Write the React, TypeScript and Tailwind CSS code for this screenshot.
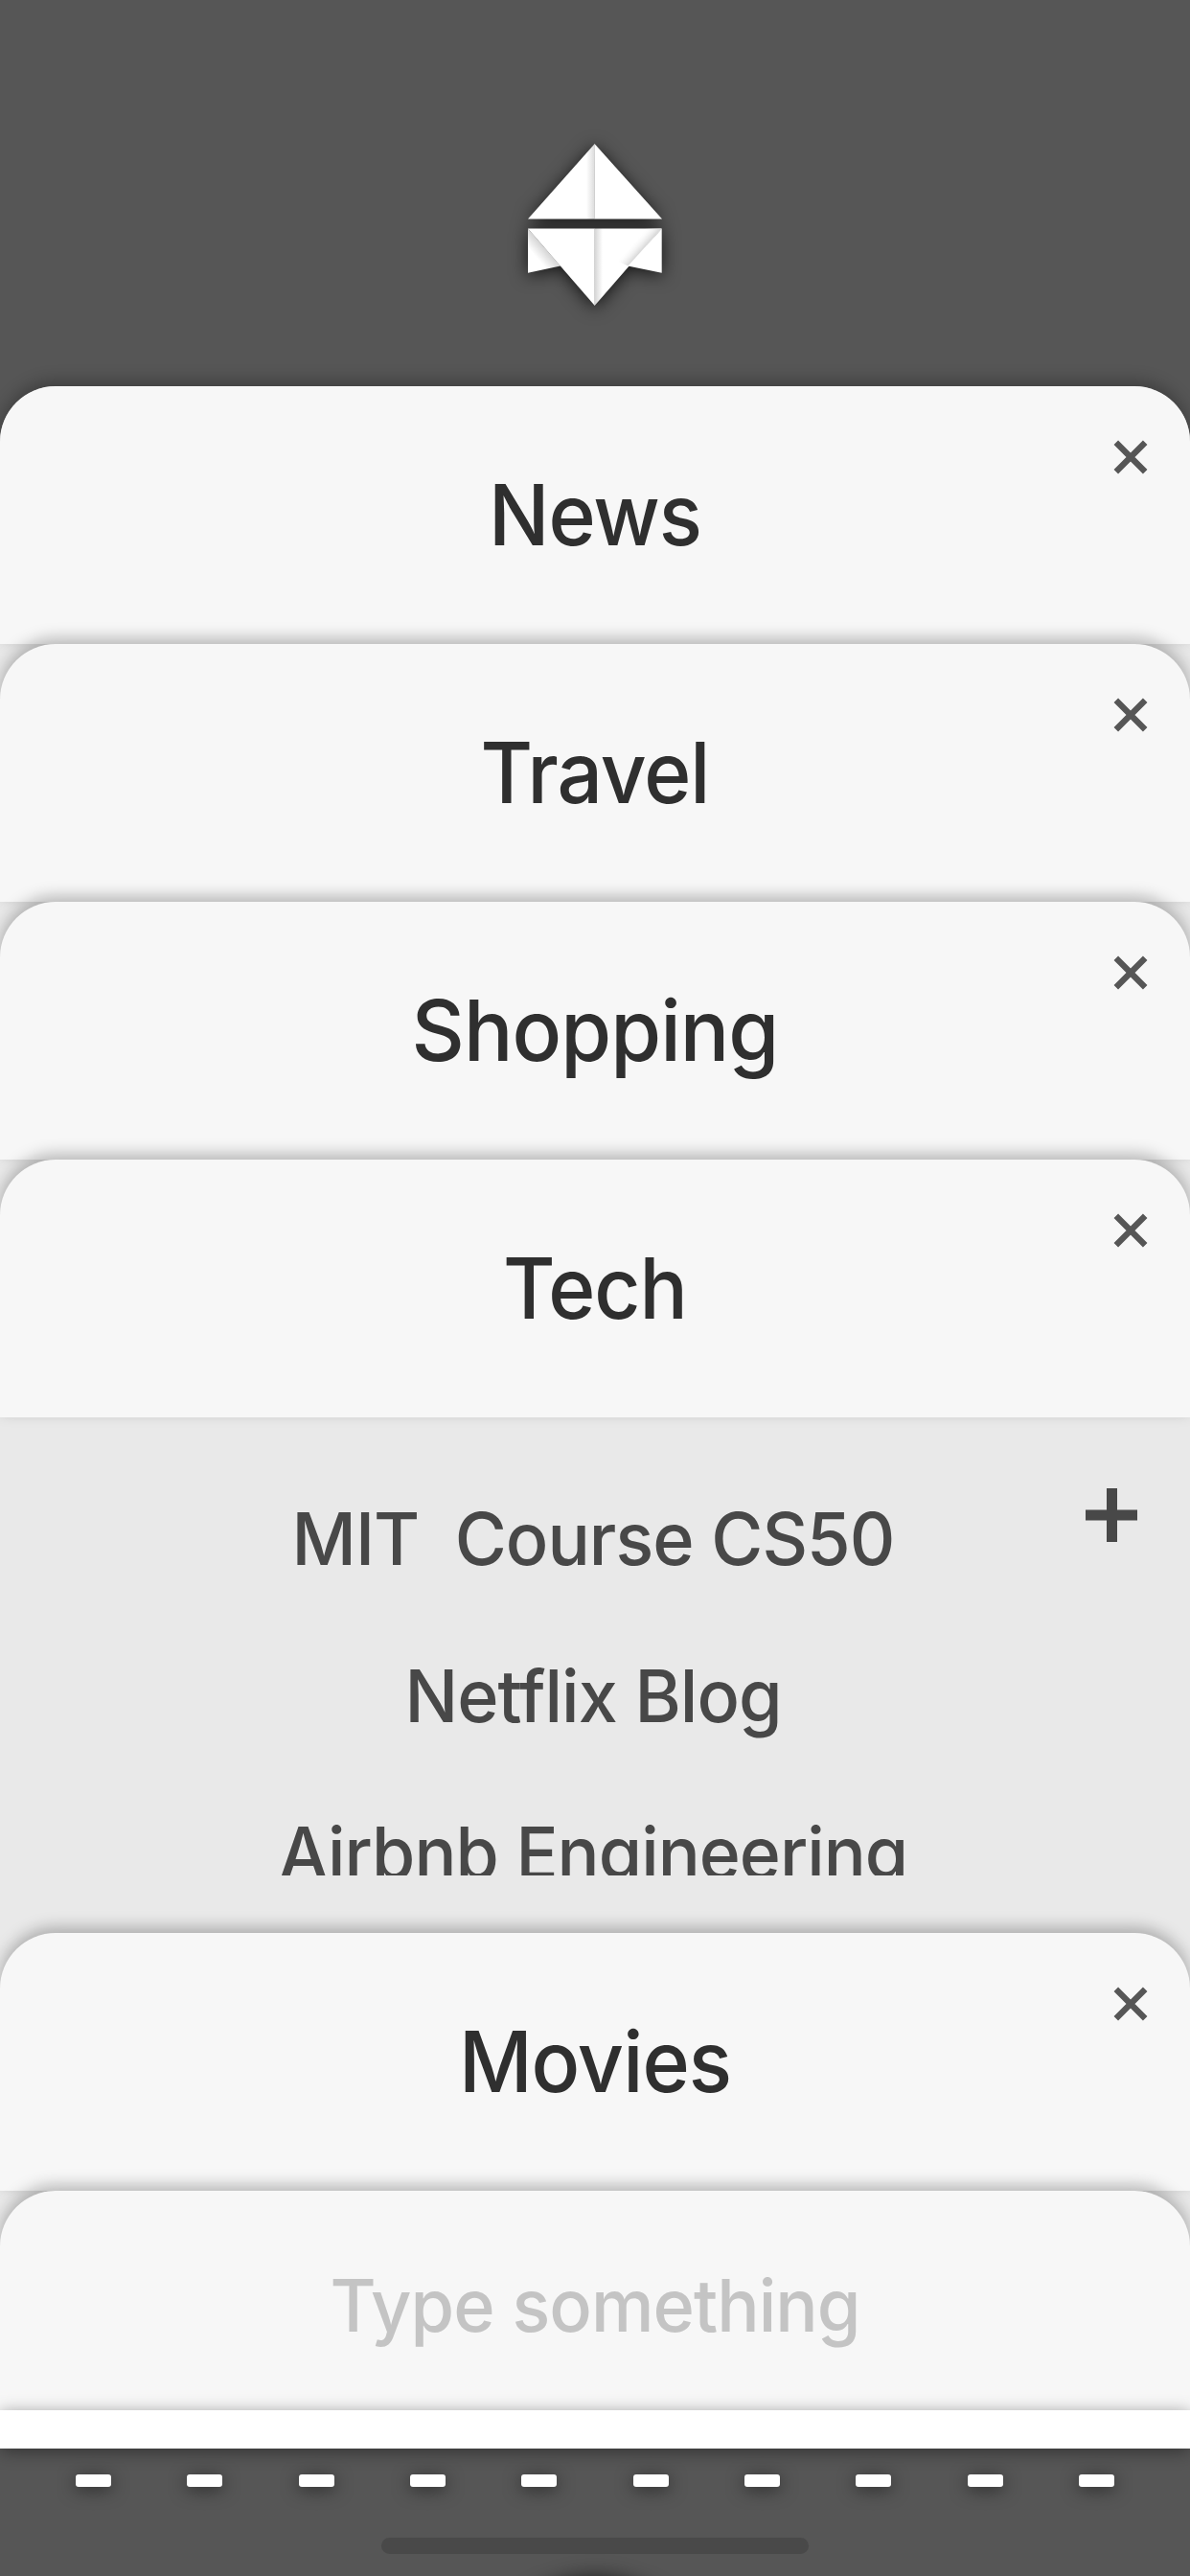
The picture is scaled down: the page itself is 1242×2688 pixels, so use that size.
import React from 'react';

const FONT = "font-['Inter','Liberation_Sans',sans-serif]";
const CARD_SHADOW = 'shadow-[0_-6px_16px_rgba(0,0,0,0.26)]';

function Logo() {
  return (
    <svg
      width="142"
      height="172"
      viewBox="551 149 142 172"
      className="mt-[149px] overflow-visible drop-shadow-[0_3px_9px_rgba(0,0,0,0.75)]"
    >
      <defs>
        <linearGradient id="fold-left" x1="613" x2="621.5" y1="0" y2="0" gradientUnits="userSpaceOnUse">
          <stop offset="0" stopColor="#fff" />
          <stop offset="1" stopColor="#dcdcdc" />
        </linearGradient>
        <linearGradient id="fold-right" x1="621.5" x2="630" y1="0" y2="0" gradientUnits="userSpaceOnUse">
          <stop offset="0" stopColor="#d4d4d4" />
          <stop offset="1" stopColor="#fff" />
        </linearGradient>
        <linearGradient id="flap-left" x1="576" y1="266" x2="566" y2="274.5" gradientUnits="userSpaceOnUse">
          <stop offset="0" stopColor="#d4d4d4" />
          <stop offset="1" stopColor="#fff" />
        </linearGradient>
        <linearGradient id="flap-right" x1="666" y1="266" x2="657" y2="258" gradientUnits="userSpaceOnUse">
          <stop offset="0" stopColor="#dadada" />
          <stop offset="1" stopColor="#fff" stopOpacity="0" />
        </linearGradient>
      </defs>
      <path d="M621.7 150 552 228.6h69.7z" fill="url(#fold-left)" />
      <path d="M621.5 150 692 228.6h-70.5z" fill="#fff" />
      <path d="M552 238.4v46.4l34-7.3z" fill="url(#flap-left)" />
      <path d="M691.7 238.4v46.4l-35.5-7.3z" fill="#fff" />
      <path d="M552 238.4h69.8V319z" fill="#fff" />
      <path d="M621.6 238.4h70L621.6 319z" fill="url(#fold-right)" />
      <path d="M640 238.4h51.6L656.5 277.5 640 270z" fill="url(#flap-right)" />
    </svg>
  );
}

function CloseIcon() {
  return (
    <svg width="36" height="36" viewBox="0 0 36 36" className="absolute top-[79px] right-[44px] -mt-[23px]">
      <path d="M2.8 2.8 33.2 33.2M33.2 2.8 2.8 33.2" stroke="#565656" strokeWidth="6.4" />
    </svg>
  );
}

function Card({ title, fit }: { title: string; fit: string }) {
  return (
    <div className={`relative h-[269px] shrink-0 rounded-t-[58px] bg-[#f7f7f7] ${CARD_SHADOW}`}>
      <h2
        className={`pt-[81px] text-center text-[88px] leading-[107px] font-medium tracking-[-1px] text-[#2f2f2f] ${fit}`}
      >
        {title}
      </h2>
      <CloseIcon />
    </div>
  );
}

function TechLinks() {
  return (
    <div className="relative h-[538px] shrink-0 pt-[45px]">
      <ul className="h-[433px] overflow-hidden pr-[4px] text-center text-[76px] leading-[164px] font-medium tracking-[-1px] whitespace-pre text-[#484848]">
        <li className="-mt-[1px] h-[164px] scale-x-[0.971]">MIT  Course CS50</li>
        <li className="h-[164px] scale-x-[0.969]">Netflix Blog</li>
        <li className="h-[164px] scale-x-[0.964]">Airbnb Engineering</li>
      </ul>
      <svg width="56" height="56" viewBox="0 0 56 56" className="absolute top-[74px] right-[54px]">
        <path d="M28.5 0v56M1 28h54" stroke="#484848" strokeWidth="11" />
      </svg>
    </div>
  );
}

export default function App() {
  return (
    <div className={`flex h-[2688px] w-[1242px] flex-col overflow-hidden bg-[#565656] ${FONT}`}>
      <header className="flex h-[403px] shrink-0 justify-center">
        <Logo />
      </header>
      <main className="flex h-[2112px] shrink-0 flex-col rounded-t-[58px] bg-[#e9e9e9]">
        <Card title="News" fit="scale-x-[0.953]" />
        <Card title="Travel" fit="scale-x-[0.95]" />
        <Card title="Shopping" fit="scale-x-[0.973]" />
        <Card title="Tech" fit="scale-x-[0.95]" />
        <TechLinks />
        <Card title="Movies" fit="scale-x-[0.955]" />
        <div className={`relative h-[229px] shrink-0 rounded-t-[58px] bg-[#f7f7f7] ${CARD_SHADOW}`}>
          <p className="scale-x-[0.972] pt-[73px] text-center text-[76px] leading-[92px] font-medium tracking-[-1px] text-[#c4c4c4]">
            Type something
          </p>
        </div>
      </main>
      <div className="relative h-10 shrink-0 bg-white shadow-[0_3px_18px_rgba(0,0,0,0.42)]" />
      <footer className="flex flex-col items-center">
        <div className="mt-[27px] flex w-[1084px] justify-between">
          {Array.from({ length: 10 }, (_, i) => (
            <span key={i} className="h-[13px] w-[37px] rounded-[3px] bg-white shadow-[0_3px_18px_rgba(0,0,0,0.5)]" />
          ))}
        </div>
        <div className="mt-[53px] h-[17px] w-[446px] rounded-full bg-[#494949]" />
        <div className="mt-[24px] h-[250px] w-[250px] shrink-0 rounded-full shadow-[0_0_20px_rgba(0,0,0,0.65)]" />
      </footer>
    </div>
  );
}
